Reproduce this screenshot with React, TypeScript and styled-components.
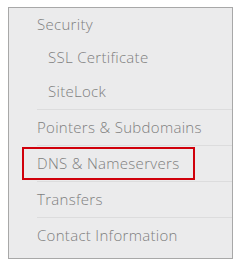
import React from 'react'
import styled, { createGlobalStyle } from 'styled-components'

type Item = { label: string; height: number; sub?: boolean; divider?: boolean; active?: boolean }

const items: Item[] = [
  { label: 'Security', height: 34 },
  { label: 'SSL Certificate', height: 33, sub: true },
  { label: 'SiteLock', height: 35, sub: true, divider: true },
  { label: 'Pointers & Subdomains', height: 36, divider: true },
  { label: 'DNS & Nameservers', height: 36, divider: true, active: true },
  { label: 'Transfers', height: 36, divider: true },
  { label: 'Contact Information', height: 36 },
]

export default function App() {
  return (
    <>
      <GlobalStyle />
      <Panel>
        <Menu>
          {items.map((item) => (
            <MenuItem key={item.label} $height={item.height} $sub={item.sub} $divider={item.divider}>
              {item.label}
              {item.active && <Highlight />}
            </MenuItem>
          ))}
        </Menu>
      </Panel>
    </>
  )
}

const GlobalStyle = createGlobalStyle`
  body {
    margin: 0;
    padding: 7px 8px;
    background: #fff;
    font-family: 'Open Sans', sans-serif;
  }
`

const Panel = styled.div`
  width: 225px;
  height: 252px;
  box-sizing: border-box;
  background: #ebebec;
  border: 1px solid #a8a8a8;
  padding: 0 0 0 28px;
`

const Menu = styled.ul`
  list-style: none;
  margin: 0;
  padding: 0;
  display: flex;
  flex-direction: column;
`

const MenuItem = styled.li<{ $height: number; $sub?: boolean; $divider?: boolean }>`
  position: relative;
  display: flex;
  align-items: center;
  height: ${(p) => p.$height}px;
  box-sizing: border-box;
  padding: 0 0 2px ${(p) => (p.$sub ? 11 : 0)}px;
  border-bottom: 1px solid ${(p) => (p.$divider ? '#dcdcdd' : 'transparent')};
  color: #7e7e7e;
  font-size: 15px;
  font-weight: 300;
  letter-spacing: 0.3px;
  white-space: nowrap;
`

const Highlight = styled.span`
  position: absolute;
  left: -15px;
  top: 1px;
  width: 173px;
  height: 33px;
  box-sizing: border-box;
  border: 2px solid #d0000b;
`
